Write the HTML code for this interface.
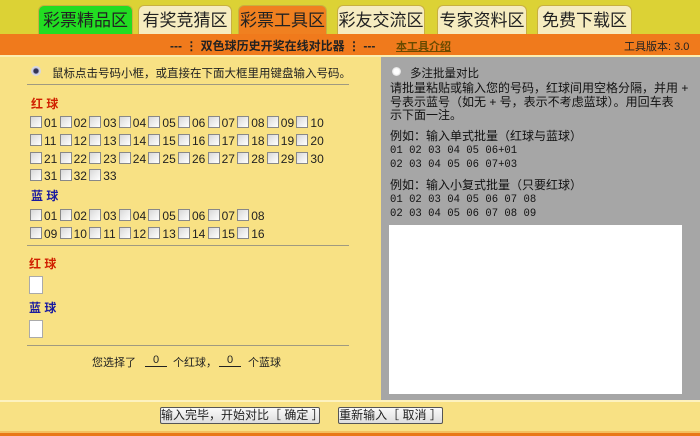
<!DOCTYPE html>
<html><head><meta charset="utf-8"><style>
*{margin:0;padding:0;box-sizing:border-box}
body{width:700px;height:436px;overflow:hidden;position:relative;background:#f8e184;font-family:"Liberation Sans","Noto Sans CJK SC",sans-serif;font-size:12px;color:#222}
.a{position:absolute}
.tab{position:absolute;top:5px;height:29px;border-radius:6px 6px 0 0;font-size:17px;text-align:center;line-height:29px;color:#222;border:1px solid #c8b040;border-bottom:none}
.cb{position:absolute;width:12px;height:12px;border:1px solid #888;background:linear-gradient(135deg,#d8d8d8,#fff)}
.n{position:absolute;font-size:12px;color:#222}
.btn{position:absolute;top:407px;height:17px;border:1px solid #555;border-radius:2px;background:linear-gradient(#fafafa,#ddd);font-size:12px;line-height:15px;text-align:center}
.mono{font-family:'Liberation Mono',monospace;font-size:10.6px}
</style></head><body>
<div class="a" style="left:0;top:0;width:700px;height:34px;background:#dcd235"></div>
<div class="tab" style="left:38px;width:95px;background:#22dd22">彩票精品区</div>
<div class="tab" style="left:138px;width:94px;background:#f6ecc0">有奖竞猜区</div>
<div class="tab" style="left:238px;width:89px;background:#f08020">彩票工具区</div>
<div class="tab" style="left:337px;width:88px;background:#f6ecc0">彩友交流区</div>
<div class="tab" style="left:437px;width:90px;background:#f6ecc0">专家资料区</div>
<div class="tab" style="left:537px;width:95px;background:#f6ecc0">免费下载区</div>
<div class="a" style="left:0;top:34px;width:700px;height:21px;background:#f07a1c"></div>
<div class="a" style="left:170px;top:37px;font-size:12px;font-weight:bold;color:#222">--- ⋮ 双色球历史开奖在线对比器 ⋮ ---</div>
<div class="a" style="left:396px;top:38px;font-size:11px;color:#6a4a00;text-decoration:underline;font-weight:bold">本工具介绍</div>
<div class="a" style="left:624px;top:38px;font-size:11px;color:#222">工具版本: 3.0</div>
<div class="a" style="left:0;top:55px;width:700px;height:2px;background:#fbeeb0"></div>

<div class="a" style="left:31px;top:66px;width:10px;height:10px;border-radius:50%;background:radial-gradient(#335 30%,#ccd 45%,#eee)"></div>
<div class="a" style="left:52px;top:65px;font-size:11.5px">鼠标点击号码小框，或直接在下面大框里用键盘输入号码。</div>
<div class="a" style="left:27px;top:84px;width:322px;height:1px;background:#a09a80"></div>
<div class="a" style="left:31px;top:95px;font-size:12px;font-weight:bold;color:#d02000">红 球</div>
<div id="red"></div>
<div class="a" style="left:31px;top:187px;font-size:12px;font-weight:bold;color:#1a1aa0">蓝 球</div>
<div class="a" style="left:27px;top:245px;width:322px;height:1px;background:#a09a80"></div>
<div class="a" style="left:29px;top:255px;font-size:12px;font-weight:bold;color:#d02000">红 球</div>
<div class="a" style="left:29px;top:276px;width:14px;height:18px;background:#fff;border:1px solid #aaa"></div>
<div class="a" style="left:29px;top:299px;font-size:12px;font-weight:bold;color:#1a1aa0">蓝 球</div>
<div class="a" style="left:29px;top:320px;width:14px;height:18px;background:#fff;border:1px solid #aaa"></div>
<div class="a" style="left:27px;top:345px;width:322px;height:1px;background:#a09a80"></div>
<div class="a" style="left:92px;top:354px;font-size:11px">您选择了</div>
<div class="a" style="left:145px;top:354px;width:22px;font-size:11px;text-align:center;border-bottom:1px solid #222">0</div>
<div class="a" style="left:173px;top:354px;font-size:11px">个红球，</div>
<div class="a" style="left:219px;top:354px;width:22px;font-size:11px;text-align:center;border-bottom:1px solid #222">0</div>
<div class="a" style="left:248px;top:354px;font-size:11px">个蓝球</div>

<div class="a" style="left:381px;top:57px;width:319px;height:343px;background:#a6a6a6"></div>
<div class="a" style="left:392px;top:67px;width:9px;height:9px;border-radius:50%;background:radial-gradient(#fff 40%,#bbb)"></div>
<div class="a" style="left:410px;top:65px;font-size:11.5px;color:#111">多注批量对比</div>
<div class="a" style="left:390px;top:82px;width:310px;font-size:12px;line-height:13.5px;color:#111;white-space:nowrap">请批量粘贴或输入您的号码，红球间用空格分隔，并用 +<br>号表示蓝号（如无 + 号，表示不考虑蓝球）。用回车表<br>示下面一注。</div>
<div class="a" style="left:390px;top:130px;line-height:12.5px;color:#111"><span style="font-size:12px">例如：输入单式批量（红球与蓝球）</span><br><span class="mono">01 02 03 04 05 06+01</span><br><span class="mono">02 03 04 05 06 07+03</span></div>
<div class="a" style="left:390px;top:179px;line-height:12.5px;color:#111"><span style="font-size:12px">例如：输入小复式批量（只要红球）</span><br><span class="mono">01 02 03 04 05 06 07 08</span><br><span class="mono">02 03 04 05 06 07 08 09</span></div>
<div class="a" style="left:389px;top:225px;width:293px;height:169px;background:#fff"></div>

<div class="a" style="left:0;top:400px;width:700px;height:2px;background:#fdf2c0"></div>
<div class="btn" style="left:160px;width:160px">输入完毕，开始对比［ 确定 ］</div>
<div class="btn" style="left:338px;width:105px">重新输入［ 取消 ］</div>
<div class="a" style="left:0;top:431px;width:700px;height:2px;background:#f3c060"></div>
<div class="a" style="left:0;top:433px;width:700px;height:3px;background:#e87818"></div>
<script>
var h='';
function row(nums,y){nums.forEach(function(n,i){var x=30+i*29.6;h+='<div class="cb" style="left:'+x+'px;top:'+(y-6)+'px"></div><div class="n" style="left:'+(x+14)+'px;top:'+(y-6)+'px">'+(n<10?'0'+n:n)+'</div>';});}
function r(a,b){var o=[];for(var i=a;i<=b;i++)o.push(i);return o;}
row(r(1,10),122);row(r(11,20),140);row(r(21,30),158);row(r(31,33),175);
row(r(1,8),215);row(r(9,16),233);
document.getElementById('red').innerHTML=h;
</script>
</body></html>
